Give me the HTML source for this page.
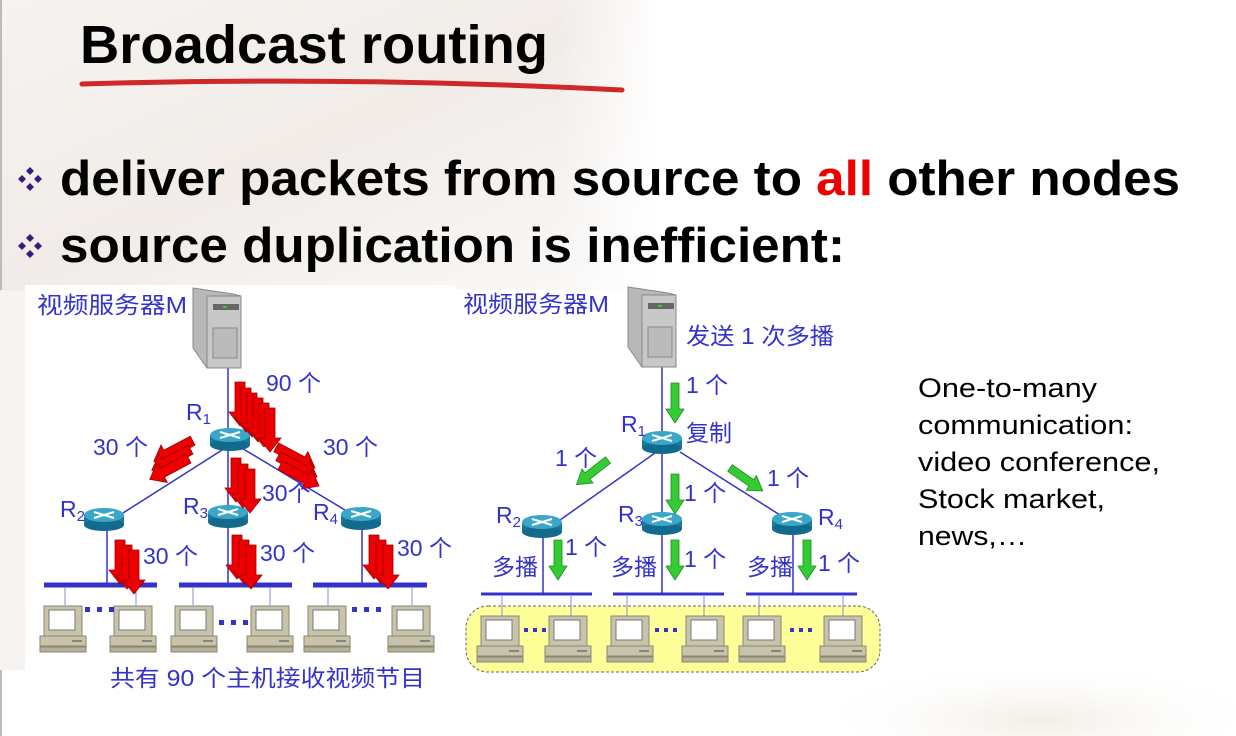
<!DOCTYPE html>
<html><head><meta charset="utf-8"><style>
html,body{margin:0;padding:0;background:#fff}
svg{display:block}
text{font-family:"Liberation Sans","Noto Sans CJK SC",sans-serif}
</style></head><body>
<svg width="1236" height="736" viewBox="0 0 1236 736" xmlns="http://www.w3.org/2000/svg">
<defs>
<linearGradient id="bg1" x1="0" y1="0" x2="1" y2="1">
<stop offset="0" stop-color="#f6f3f0"/><stop offset="0.5" stop-color="#f1ece8"/><stop offset="1" stop-color="#fbfaf9"/>
</linearGradient>
<linearGradient id="fadeR" x1="0" y1="0" x2="1" y2="0">
<stop offset="0" stop-color="#fff" stop-opacity="0"/><stop offset="1" stop-color="#fff" stop-opacity="1"/>
</linearGradient>
<radialGradient id="bg2" cx="0.5" cy="0.6" r="0.6">
<stop offset="0" stop-color="#f3eee6"/><stop offset="1" stop-color="#fff" stop-opacity="0"/>
</radialGradient>
<g id="comp">
<rect x="0" y="0" width="38" height="30" fill="#c8c4ac" stroke="#8a8670" stroke-width="1"/>
<rect x="5" y="4" width="26" height="20" fill="#fff" stroke="#777" stroke-width="1"/>
<rect x="-4" y="30" width="46" height="10" fill="#c8c4ac" stroke="#8a8670"/>
<line x1="28" y1="35" x2="38" y2="35" stroke="#444"/>
<rect x="-4" y="41" width="46" height="5" fill="#b4b09a" stroke="#8a8670"/>
</g>
<g id="rtr">
<rect x="-20" y="-3" width="40" height="10" fill="#1a7a9e"/>
<ellipse cx="0" cy="7" rx="20" ry="6" fill="#126a8c"/>
<ellipse cx="0" cy="-3" rx="20" ry="7" fill="#3aa6c8"/>
<path d="M-10 -6 L10 0 M-10 0 L10 -6 M-4 -3 L4 -3" stroke="#fff" stroke-width="2"/>
</g>
<g id="srv">
<path d="M0 0 L40 6 L48 8 L48 80 L14 80 L0 60 Z" fill="#b8b8b8" stroke="#888"/>
<rect x="14" y="8" width="34" height="72" fill="#c8c8c8" stroke="#888"/>
<rect x="20" y="16" width="26" height="6" fill="#666"/>
<rect x="30" y="18" width="4" height="2" fill="#3c3"/>
<rect x="20" y="40" width="24" height="30" fill="#bbb" stroke="#888"/>
</g>
<path id="ra" d="M-5 0 L5 0 L5 30 L11 30 L0 44 L-11 30 L-5 30 Z" fill="#e00" stroke="#900" stroke-width="0.8"/>
<path id="ga" d="M-4 0 L4 0 L4 26 L9 26 L0 40 L-9 26 L-4 26 Z" fill="#3c3" stroke="#282" stroke-width="0.8"/>
</defs>
<rect width="1236" height="736" fill="#fff"/>
<rect x="0" y="0" width="660" height="290" fill="url(#bg1)"/>
<rect x="560" y="0" width="100" height="290" fill="url(#fadeR)"/>
<rect x="0" y="0" width="2" height="736" fill="#bbb"/>
<rect x="0" y="290" width="25" height="380" fill="#f6f3f0"/>
<ellipse cx="1040" cy="710" rx="200" ry="50" fill="url(#bg2)"/>
<rect x="25" y="285" width="430" height="410" fill="#fff"/>

<text x="80" y="63" font-size="54" font-weight="bold" textLength="468" lengthAdjust="spacingAndGlyphs">Broadcast routing</text>
<path d="M82 84 Q350 76 622 90" stroke="#d02828" stroke-width="5" fill="none" stroke-linecap="round"/>

<g fill="#3a1a7a">
<path d="M30 174 l4 4 l-4 4 l-4 -4z M22 182 l4 4 l-4 4 l-4 -4z M38 182 l4 4 l-4 4 l-4 -4z M30 190 l4 4 l-4 4 l-4 -4z" transform="translate(0,-7)"/>
<path d="M30 240 l4 4 l-4 4 l-4 -4z M22 248 l4 4 l-4 4 l-4 -4z M38 248 l4 4 l-4 4 l-4 -4z M30 256 l4 4 l-4 4 l-4 -4z" transform="translate(0,-6)"/>
</g>
<text x="60" y="195" font-size="49" font-weight="bold" textLength="1120" lengthAdjust="spacingAndGlyphs">deliver packets from source to <tspan fill="#e00">all</tspan> other nodes</text>
<text x="60" y="262" font-size="49" font-weight="bold" textLength="785" lengthAdjust="spacingAndGlyphs">source duplication is inefficient:</text>

<!-- LEFT DIAGRAM -->
<g stroke="#3333cc" stroke-width="1.5" fill="none">
<line x1="228" y1="365" x2="228" y2="585"/>
<line x1="230" y1="445" x2="123" y2="513"/>
<line x1="240" y1="447" x2="345" y2="510"/>
<line x1="107" y1="528" x2="107" y2="585"/>
<line x1="362" y1="527" x2="362" y2="585"/>
</g>
<g stroke="#3333cc" stroke-width="5">
<line x1="44" y1="585" x2="157" y2="585"/><line x1="179" y1="585" x2="292" y2="585"/><line x1="313" y1="585" x2="427" y2="585"/>
</g>
<g stroke="#8888dd" stroke-width="1">
<line x1="65" y1="587" x2="65" y2="605"/><line x1="136" y1="587" x2="136" y2="605"/>
<line x1="193" y1="587" x2="193" y2="605"/><line x1="270" y1="587" x2="270" y2="605"/>
<line x1="328" y1="587" x2="328" y2="605"/><line x1="412" y1="587" x2="412" y2="605"/>
</g>
<use href="#srv" x="193" y="288"/>
<use href="#rtr" x="230" y="438"/><use href="#rtr" x="104" y="518"/><use href="#rtr" x="228" y="515"/><use href="#rtr" x="361" y="517"/>
<use href="#comp" x="44" y="606"/><use href="#comp" x="114" y="606"/><use href="#comp" x="175" y="606"/><use href="#comp" x="251" y="606"/><use href="#comp" x="308" y="606"/><use href="#comp" x="392" y="606"/>
<g fill="#3333cc"><rect x="85" y="607" width="5" height="5"/><rect x="97" y="607" width="5" height="5"/><rect x="109" y="607" width="5" height="5"/>
<rect x="219" y="620" width="5" height="5"/><rect x="231" y="620" width="5" height="5"/><rect x="243" y="620" width="5" height="5"/>
<rect x="352" y="607" width="5" height="5"/><rect x="364" y="607" width="5" height="5"/><rect x="376" y="607" width="5" height="5"/></g>
<g>
<use href="#ra" x="240" y="382"/><use href="#ra" x="246" y="388"/><use href="#ra" x="252" y="393"/><use href="#ra" x="258" y="398"/><use href="#ra" x="264" y="403"/><use href="#ra" x="270" y="408"/>
<use href="#ra" x="236" y="458"/><use href="#ra" x="243" y="464"/><use href="#ra" x="250" y="469"/>
<use href="#ra" x="120" y="540"/><use href="#ra" x="127" y="545"/><use href="#ra" x="134" y="550"/>
<use href="#ra" x="237" y="535"/><use href="#ra" x="244" y="540"/><use href="#ra" x="251" y="545"/>
<use href="#ra" x="374" y="535"/><use href="#ra" x="381" y="540"/><use href="#ra" x="388" y="545"/>
<g transform="translate(175,450) rotate(62)"><use href="#ra" x="0" y="-20"/><use href="#ra" x="7" y="-14"/><use href="#ra" x="14" y="-8"/></g>
<g transform="translate(285,452) rotate(-62)"><use href="#ra" x="0" y="-10"/><use href="#ra" x="-7" y="-4"/><use href="#ra" x="-14" y="2"/></g>
</g>
<g fill="#3333cc" font-size="23">
<text x="37" y="313" textLength="150" lengthAdjust="spacingAndGlyphs">视频服务器M</text>
<text x="266" y="391">90 个</text>
<text x="93" y="455">30 个</text>
<text x="323" y="455">30 个</text>
<text x="262" y="501">30个</text>
<text x="143" y="564">30 个</text>
<text x="260" y="561">30 个</text>
<text x="397" y="556">30 个</text>
<text x="110" y="686" textLength="315" lengthAdjust="spacingAndGlyphs">共有 90 个主机接收视频节目</text>
<text x="186" y="420">R<tspan font-size="15" dy="4">1</tspan></text>
<text x="60" y="517">R<tspan font-size="15" dy="4">2</tspan></text>
<text x="183" y="514">R<tspan font-size="15" dy="4">3</tspan></text>
<text x="313" y="520">R<tspan font-size="15" dy="4">4</tspan></text>
</g>

<!-- RIGHT DIAGRAM -->
<rect x="466" y="606" width="414" height="66" rx="22" fill="#ffff99" stroke="#666" stroke-dasharray="3,2"/>
<g stroke="#3333cc" stroke-width="1.5" fill="none">
<line x1="662" y1="366" x2="662" y2="594"/>
<line x1="655" y1="453" x2="560" y2="520"/>
<line x1="680" y1="452" x2="780" y2="515"/>
<line x1="543" y1="535" x2="543" y2="594"/>
<line x1="793" y1="532" x2="793" y2="594"/>
</g>
<g stroke="#3333cc" stroke-width="3">
<line x1="481" y1="594" x2="592" y2="594"/><line x1="613" y1="594" x2="724" y2="594"/><line x1="746" y1="594" x2="857" y2="594"/>
</g>
<g stroke="#8888dd" stroke-width="1">
<line x1="502" y1="596" x2="502" y2="616"/><line x1="571" y1="596" x2="571" y2="616"/>
<line x1="627" y1="596" x2="627" y2="616"/><line x1="704" y1="596" x2="704" y2="616"/>
<line x1="759" y1="596" x2="759" y2="616"/><line x1="843" y1="596" x2="843" y2="616"/>
</g>
<use href="#srv" x="628" y="287"/>
<use href="#rtr" x="662" y="441"/><use href="#rtr" x="542" y="525"/><use href="#rtr" x="662" y="522"/><use href="#rtr" x="792" y="522"/>
<use href="#comp" x="481" y="616"/><use href="#comp" x="549" y="616"/><use href="#comp" x="611" y="616"/><use href="#comp" x="686" y="616"/><use href="#comp" x="743" y="616"/><use href="#comp" x="824" y="616"/>
<g fill="#3333cc"><rect x="524" y="628" width="4" height="4"/><rect x="533" y="628" width="4" height="4"/><rect x="542" y="628" width="4" height="4"/>
<rect x="655" y="628" width="4" height="4"/><rect x="664" y="628" width="4" height="4"/><rect x="673" y="628" width="4" height="4"/>
<rect x="790" y="628" width="4" height="4"/><rect x="799" y="628" width="4" height="4"/><rect x="808" y="628" width="4" height="4"/></g>
<use href="#ga" x="675" y="383"/>
<use href="#ga" x="675" y="474"/>
<use href="#ga" x="558" y="540"/><use href="#ga" x="675" y="540"/><use href="#ga" x="807" y="540"/>
<g transform="translate(608,460) rotate(52)"><use href="#ga" x="0" y="0"/></g>
<g transform="translate(730,468) rotate(-55)"><use href="#ga" x="0" y="0"/></g>
<g fill="#3333cc" font-size="23">
<text x="463" y="312" textLength="146" lengthAdjust="spacingAndGlyphs">视频服务器M</text>
<text x="686" y="344" textLength="148" lengthAdjust="spacingAndGlyphs">发送 1 次多播</text>
<text x="686" y="393">1 个</text>
<text x="686" y="441">复制</text>
<text x="555" y="466">1 个</text>
<text x="767" y="486">1 个</text>
<text x="684" y="501">1 个</text>
<text x="565" y="555">1 个</text>
<text x="684" y="567">1 个</text>
<text x="818" y="571">1 个</text>
<text x="492" y="575">多播</text>
<text x="611" y="575">多播</text>
<text x="747" y="575">多播</text>
<text x="621" y="432">R<tspan font-size="15" dy="4">1</tspan></text>
<text x="496" y="523">R<tspan font-size="15" dy="4">2</tspan></text>
<text x="618" y="522">R<tspan font-size="15" dy="4">3</tspan></text>
<text x="818" y="525">R<tspan font-size="15" dy="4">4</tspan></text>
</g>

<g font-size="27" fill="#000">
<text x="918" y="397" textLength="179" lengthAdjust="spacingAndGlyphs">One-to-many</text>
<text x="918" y="434" textLength="215" lengthAdjust="spacingAndGlyphs">communication:</text>
<text x="918" y="471" textLength="242" lengthAdjust="spacingAndGlyphs">video conference,</text>
<text x="918" y="508" textLength="187" lengthAdjust="spacingAndGlyphs">Stock market,</text>
<text x="918" y="545" textLength="109" lengthAdjust="spacingAndGlyphs">news,…</text>
</g>
</svg>
</body></html>
